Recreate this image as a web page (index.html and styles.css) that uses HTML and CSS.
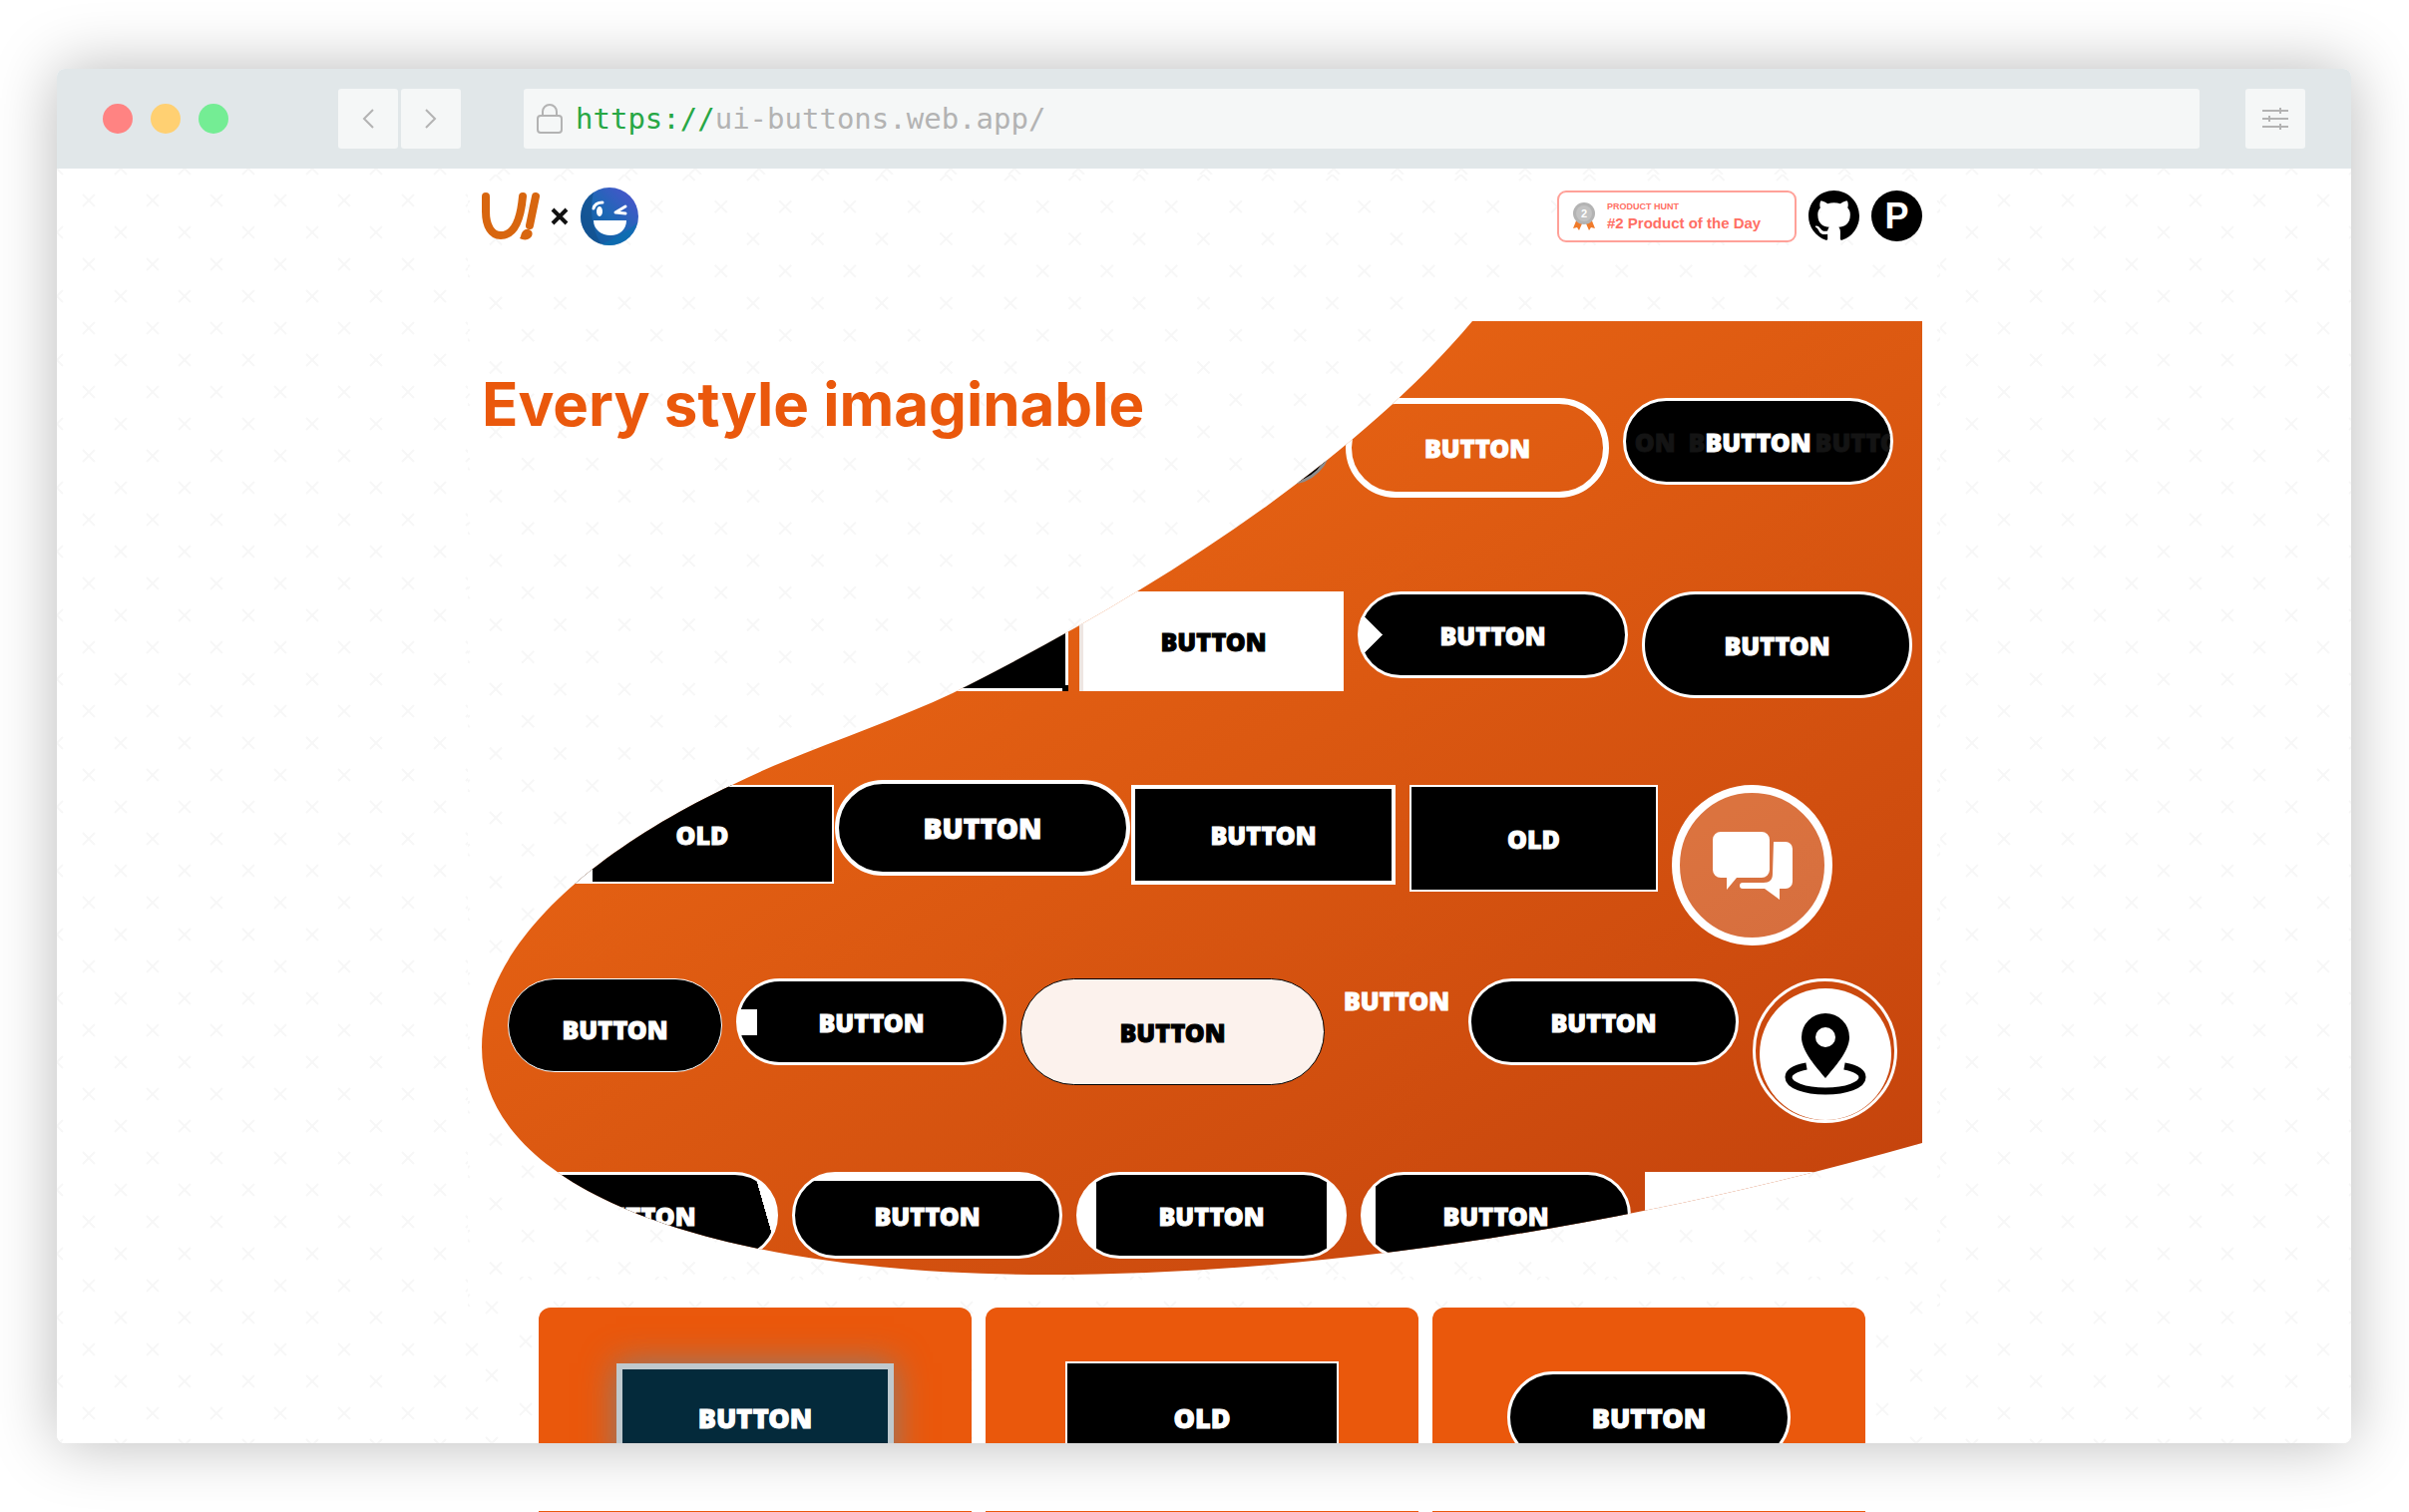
FILE: index.html
```html
<!DOCTYPE html>
<html lang="en">
<head>
  <meta charset="UTF-8">
  <meta name="viewport" content="width=device-width, initial-scale=1.0">
  <title>UI Buttons</title>
  <link rel="stylesheet" href="styles.css">
</head>
<body>
<div class="window">
  <div class="toolbar">
    <div class="lights">
      <span class="light red"></span>
      <span class="light yellow"></span>
      <span class="light green"></span>
    </div>
    <div class="nav">
      <button class="tool" aria-label="Back"><svg width="16" height="26" viewBox="0 0 16 26"><path d="M13 4 4 13l9 9"/></svg></button>
      <button class="tool" aria-label="Forward"><svg width="16" height="26" viewBox="0 0 16 26"><path d="m3 4 9 9-9 9"/></svg></button>
    </div>
    <div class="address">
      <svg width="28" height="32" viewBox="0 0 28 32"><rect x="2" y="13" width="24" height="17" rx="3"/><path d="M7 13V9a7 7 0 0 1 14 0v4"/></svg>
      <span class="url"><span class="scheme">https://</span>ui-buttons.web.app/</span>
    </div>
    <button class="tool" aria-label="Settings"><svg width="28" height="24" viewBox="0 0 28 24"><path d="M1 4h26M1 12h26M1 20h26M19 1v6M8 9v6M19 17v6"/></svg></button>
  </div>

  <div class="page">
    <main class="hero">
      <header class="header">
        <a class="brand" href="#" aria-label="UI Buttons">
          <svg width="58" height="49" viewBox="0 0 58 49" fill="none" stroke="#d8660f" stroke-width="8" stroke-linecap="round">
            <path d="M4 5v15c0 15 6 24 15 24 14 0 20-17 22-39"/>
            <path d="m54 5-6 29"/>
            <path d="M39 45c1-5 4-8 8-7 5 1 5 8-1 10-3 1-6 0-8-1z" fill="#d8660f" stroke="none"/>
          </svg>
          <svg class="times" width="18" height="18" viewBox="0 0 18 18"><path d="m2 2 14 14M16 2 2 16" stroke="#111" stroke-width="4"/></svg>
          <svg width="60" height="60" viewBox="0 0 60 60">
            <defs>
              <linearGradient id="face" x1="0" y1="1" x2="1" y2="0">
                <stop offset="0" stop-color="#0f5596"/>
                <stop offset=".5" stop-color="#1d68b5"/>
                <stop offset="1" stop-color="#5350d0"/>
              </linearGradient>
            </defs>
            <circle cx="30" cy="30" r="29" fill="url(#face)"/>
            <path d="M14 6a29 29 0 0 0 8 52C12 44 10 22 14 6z" fill="#12508c" opacity=".7"/>
            <path d="M22 58a29 29 0 0 0 36-22C48 46 34 52 22 58z" fill="#0a6fb0" opacity=".7"/>
            <ellipse cx="20" cy="25" rx="3" ry="5" fill="#fff"/>
            <path d="M14 22c1-4 4-6 9-6M46 20l-10 6 10 1" fill="none" stroke="#fff" stroke-width="3" stroke-linecap="round" stroke-linejoin="round"/>
            <path d="M14 34h33c0 9-7 15-16 15s-17-6-17-15z" fill="#fff"/>
          </svg>
        </a>
        <div class="links">
          <a class="award" href="#">
            <svg width="22" height="28" viewBox="0 0 22 28">
              <path d="m4 16-4 10 4-1 2 3 4-9zM18 16l4 10-4-1-2 3-4-9z" fill="#f07a2a"/>
              <circle cx="11" cy="11" r="11" fill="#b3b3b3"/>
              <circle cx="11" cy="11" r="8" fill="#c2c2c2"/>
              <text x="11" y="15" text-anchor="middle" class="rank">2</text>
            </svg>
            <span class="award-text">
              <small>PRODUCT HUNT</small>
              <strong>#2 Product of the Day</strong>
            </span>
          </a>
          <a href="#" aria-label="GitHub">
            <svg width="51" height="51" viewBox="0 0 16 16"><path d="M8 0C3.58 0 0 3.58 0 8c0 3.54 2.29 6.53 5.47 7.59.4.07.55-.17.55-.38 0-.19-.01-.82-.01-1.49-2.01.37-2.53-.49-2.69-.94-.09-.23-.48-.94-.82-1.13-.28-.15-.68-.52-.01-.53.63-.01 1.08.58 1.23.82.72 1.21 1.87.87 2.33.66.07-.52.28-.87.51-1.07-1.78-.2-3.64-.89-3.64-3.95 0-.87.31-1.59.82-2.15-.08-.2-.36-1.02.08-2.12 0 0 .67-.21 2.2.82.64-.18 1.32-.27 2-.27s1.36.09 2 .27c1.53-1.04 2.2-.82 2.2-.82.44 1.1.16 1.92.08 2.12.51.56.82 1.27.82 2.15 0 3.07-1.87 3.75-3.65 3.95.29.25.54.73.54 1.48 0 1.07-.01 1.93-.01 2.2 0 .21.15.46.55.38A8.01 8.01 0 0 0 16 8c0-4.42-3.58-8-8-8z"/></svg>
          </a>
          <a class="ph" href="#" aria-label="Product Hunt">P</a>
        </div>
      </header>

      <div class="stage">
        <h1>Every style imaginable</h1>
        <div class="wall">
          <div class="row row-1">
            <button class="btn dim"></button>
            <button class="btn outline">BUTTON</button>
            <button class="btn ghost"><span class="trail before">ON &nbsp;B</span><span>BUTTON</span><span class="trail">BUTTO</span></button>
          </div>
          <div class="row row-2">
            <button class="btn corner"></button>
            <button class="btn white">BUTTON</button>
            <button class="btn arrow">BUTTON</button>
            <button class="btn tall">BUTTON</button>
          </div>
          <div class="row row-3">
            <button class="btn old first">OLD</button>
            <button class="btn big">BUTTON</button>
            <button class="btn square">BUTTON</button>
            <button class="btn old second">OLD</button>
            <button class="round chat" aria-label="Chat">
              <svg width="82" height="68" viewBox="0 0 82 68" fill="#fff"><path d="M9 0h41a8 8 0 0 1 8 8v30a8 8 0 0 1-8 8H25L15 58V46H9a8 8 0 0 1-8-8V8a8 8 0 0 1 8-8z"/><path d="M62 10h12a7 7 0 0 1 7 7v33a7 7 0 0 1-7 7h-6v11L53 57H31a3 3 0 0 1 0-6h21c6 0 9-3 9-9z"/></svg>
            </button>
          </div>
          <div class="row">
            <button class="btn short">BUTTON</button>
            <button class="btn block">BUTTON</button>
            <button class="btn pale">BUTTON</button>
            <button class="btn plain">BUTTON</button>
            <button class="btn">BUTTON</button>
            <button class="round pin" aria-label="Location">
              <span class="disc">
                <svg width="82" height="82" viewBox="0 0 82 82"><path d="M41 0a24 24 0 0 0-24 24c0 14 15 30 24 41 9-11 24-27 24-41A24 24 0 0 0 41 0zm0 14a10 10 0 1 1 0 20 10 10 0 0 1 0-20z" fill-rule="evenodd"/><path d="M22 53C11 55 4 59 4 64c0 8 16 14 37 14s37-6 37-14c0-5-7-9-18-11" fill="none" stroke="#000" stroke-width="7"/></svg>
              </span>
            </button>
          </div>
          <div class="row">
            <button class="btn slant">BUTTON</button>
            <button class="btn band-top">BUTTON</button>
            <button class="btn band-sides">BUTTON</button>
            <button class="btn band-left">BUTTON</button>
            <button class="btn blank"></button>
          </div>
        </div>
      </div>
    </main>

    <section class="gallery">
      <div class="card"><button class="btn glow">BUTTON</button></div>
      <div class="card"><button class="btn card-old">OLD</button></div>
      <div class="card"><button class="btn card-pill">BUTTON</button></div>
    </section>
  </div>
</div>

<div class="next-row">
  <span></span><span></span><span></span>
</div>

<!-- outline of the orange hero wall -->
<svg class="defs" width="0" height="0">
  <clipPath id="blob" clipPathUnits="objectBoundingBox" transform="scale(0.00069252 0.00104603)">
    <path d="M993 0C862 156 642 288 472 373 402 406 317 432 251 465 117 528 0 623 0 728 0 873 237 956 567 956 847 956 1157 906 1444 824V0z"/>
  </clipPath>
</svg>
</body>
</html>
```
FILE: styles.css
```css
* {
  box-sizing: border-box;
}
body {
  margin: 0;
  padding: 69px 58px 0 57px;
  height: 100vh;
  overflow: hidden;
  background-color: #fff;
  font-family: "Noto Sans", "Open Sans", sans-serif;
}
button {
  font-family: inherit;
  cursor: pointer;
}
.window {
  height: calc(100vh - 138px);
  overflow: hidden;
  border-radius: 8px;
  background-color: #fff;
  box-shadow: 0 0 64px rgba(0, 0, 0, 0.28);
}

/* browser toolbar */
.toolbar {
  display: flex;
  align-items: center;
  height: 100px;
  padding: 0 46px;
  background-color: #e1e7e9;
}
.lights {
  display: flex;
  gap: 18px;
  margin-right: 110px;
}
.light {
  width: 30px;
  height: 30px;
  border-radius: 50%;
}
.red {
  background-color: #ff8382;
}
.yellow {
  background-color: #ffd072;
}
.green {
  background-color: #74ed94;
}
.nav {
  display: flex;
  gap: 3px;
  margin-right: 63px;
}
.tool {
  display: flex;
  justify-content: center;
  align-items: center;
  width: 60px;
  height: 60px;
  padding: 0;
  border: none;
  border-radius: 3px;
  background-color: #f5f7f7;
}
.toolbar svg {
  fill: none;
  stroke: #b3b3b3;
  stroke-width: 2;
}
.address {
  flex: 1;
  display: flex;
  align-items: center;
  gap: 12px;
  height: 60px;
  margin-right: 46px;
  padding: 0 12px;
  border-radius: 3px;
  background-color: #f5f7f7;
}
.url {
  font-family: "DejaVu Sans Mono", monospace;
  font-size: 29px;
  color: #b3b3b3;
}
.scheme {
  color: #28a745;
}

/* page */
.page {
  padding-top: 6px;
  background: url("data:image/svg+xml,%3Csvg xmlns='http://www.w3.org/2000/svg' width='64' height='64' fill='none' stroke='%23f7f7f7' stroke-width='2'%3E%3Cpath d='M26 26l12 12M38 26L26 38M-6-6L6 6M58-6l12 12M6-6L-6 6M70-6L58 6M-6 58L6 70M58 58l12 12M6 58L-6 70M70 58L58 70'/%3E%3C/svg%3E") #fff;
}
.hero {
  max-width: 1476px;
  margin: 0 auto;
  padding: 12px 18px 33px 14px;
  background: url("data:image/svg+xml,%3Csvg xmlns='http://www.w3.org/2000/svg' width='129' height='129' viewBox='0 0 128 128' fill='none' stroke='%23f7f7f7' stroke-width='2'%3E%3Cdefs%3E%3Cpath id='x' d='M-6-6L6 6M6-6L-6 6'/%3E%3C/defs%3E%3Cuse href='%23x'/%3E%3Cuse href='%23x' x='64'/%3E%3Cuse href='%23x' x='128'/%3E%3Cuse href='%23x' y='64'/%3E%3Cuse href='%23x' x='64' y='64'/%3E%3Cuse href='%23x' x='128' y='64'/%3E%3Cuse href='%23x' y='128'/%3E%3Cuse href='%23x' x='64' y='128'/%3E%3Cuse href='%23x' x='128' y='128'/%3E%3Cuse href='%23x' x='32' y='32'/%3E%3Cuse href='%23x' x='96' y='32'/%3E%3Cuse href='%23x' x='32' y='96'/%3E%3Cuse href='%23x' x='96' y='96'/%3E%3C/svg%3E") 28px 0 #fff;
}
.header {
  display: flex;
  justify-content: space-between;
  align-items: center;
  height: 59px;
  margin-bottom: 76px;
}
.brand,
.links {
  display: flex;
  align-items: center;
  gap: 12px;
}
.brand {
  gap: 11px;
}
.links a {
  display: flex;
}
.links .award {
  align-items: center;
  gap: 12px;
  width: 240px;
  height: 52px;
  padding: 0 14px;
  border: 2px solid #ffa199;
  border-radius: 9px;
  background-color: #fff;
  color: #ff6f64;
  font-family: "Liberation Sans", Arial, sans-serif;
  text-decoration: none;
}
.award-text {
  display: flex;
  flex-direction: column;
}
.award small {
  font-size: 9px;
  font-weight: bold;
  line-height: 14px;
}
.award strong {
  font-size: 15px;
  line-height: 20px;
}
.rank {
  fill: #fff;
  font-size: 11px;
  font-weight: bold;
}
.links .ph {
  justify-content: center;
  align-items: center;
  width: 51px;
  height: 51px;
  border-radius: 50%;
  background-color: #000;
  color: #fff;
  font-family: "Liberation Sans", Arial, sans-serif;
  font-size: 36px;
  font-weight: bold;
  text-decoration: none;
}

/* hero */
.stage {
  display: grid;
}
.stage > * {
  grid-area: 1 / 1;
}
h1 {
  z-index: 1;
  justify-self: start;
  align-self: start;
  margin: 47px 0 0;
  color: #ea580c;
  font-family: Inter, sans-serif;
  font-size: 60px;
  font-weight: 700;
  line-height: 72px;
}
.wall {
  height: 956px;
  padding: 77px 0 0 26px;
  overflow: hidden;
  background: linear-gradient(150deg, #ea6614 20%, #c2410c);
  clip-path: url(#blob);
}
.row {
  display: flex;
  align-items: flex-start;
  gap: 14px;
  height: 194px;
}
.row-1 {
  padding-left: 555px;
}
.row-2 {
  padding-left: 294px;
}
.row-3 {
  padding-left: 63px;
}
.btn {
  flex: none;
  width: 271px;
  height: 87px;
  padding: 0;
  border: 3px solid #fff;
  border-radius: 60px;
  background-color: #000;
  color: #fff;
  font-size: 25px;
  font-weight: 900;
  -webkit-text-stroke: 1px;
}
.dim {
  border-color: #8c8c8c;
}
.outline {
  width: 264px;
  height: 100px;
  border-width: 6px;
  background: none;
}
.ghost {
  display: grid;
  grid-template-columns: minmax(0, 1fr) auto minmax(0, 1fr);
  align-items: center;
  overflow: hidden;
}
.trail {
  padding-left: 4px;
  color: #141414;
  text-align: left;
}
.before {
  padding: 0;
  text-align: right;
}
.corner {
  width: 268px;
  height: 100px;
  margin-right: -3px;
  border: none;
  border-radius: 0;
  background:
    linear-gradient(#000, #000) 100% 100% / 6px 6px no-repeat,
    linear-gradient(#000, #000) 0 0 / calc(100% - 3px) calc(100% - 3px) no-repeat,
    #fff;
}
.white {
  width: 265px;
  height: 100px;
  border: none;
  border-left: 4px solid #eee6e2;
  border-radius: 0;
  background-color: #fff;
  color: #000;
}
.arrow {
  background: conic-gradient(from 225deg at 22px 50%, #fff 90deg, #000 0);
}
.tall {
  height: 107px;
}
.old {
  border-width: 2px;
  border-radius: 0;
}
.first {
  width: 264px;
  height: 99px;
  border-left-width: 22px;
  padding-right: 20px;
}
.second {
  width: 249px;
  height: 107px;
}
.big {
  width: 296px;
  height: 96px;
  margin: -5px -13px 0;
  border-width: 4px;
  font-size: 28px;
}
.square {
  width: 265px;
  height: 100px;
  border-width: 4px;
  border-radius: 0;
}
.round {
  display: flex;
  flex: none;
  justify-content: center;
  align-items: center;
  padding: 0;
  border: 8px solid #fff;
  border-radius: 50%;
}
.chat {
  width: 161px;
  height: 161px;
  background-color: rgba(255, 255, 255, 0.2);
}
.pin {
  align-items: flex-end;
  width: 145px;
  height: 145px;
  border-width: 3px;
  background: none;
}
.disc {
  display: flex;
  justify-content: center;
  align-items: center;
  width: 132px;
  height: 132px;
  border-radius: 50%;
  background-color: #fff;
}
.short {
  width: 215px;
  height: 94px;
  padding-top: 8px;
  border-width: 1px;
}
.block {
  background: linear-gradient(#fff, #fff) 0 50% / 18px 26px no-repeat #000;
}
.pale {
  width: 305px;
  height: 107px;
  border: 1px solid #000;
  background-color: #fcf2ed;
  color: #000;
}
.plain {
  width: 116px;
  height: 44px;
  border: none;
  background: none;
}
.slant {
  background: linear-gradient(74deg, #000 93%, #fff 0);
}
.band-top {
  background: linear-gradient(#fff 6px, #000 0);
}
.band-sides {
  background: linear-gradient(90deg, #fff 17px, #000 0 calc(100% - 17px), #fff 0);
}
.band-left {
  background: linear-gradient(90deg, #fff 12px, #000 0);
}
.blank {
  border: none;
  border-radius: 0;
  background-color: #fff;
}

/* cards */
.gallery {
  display: grid;
  grid-template-columns: repeat(3, 1fr);
  gap: 14px;
  max-width: 1454px;
  margin: -31px auto 0;
  padding: 31px 64px 0 60px;
  background: url("data:image/svg+xml,%3Csvg xmlns='http://www.w3.org/2000/svg' width='68' height='68' fill='none' stroke='%23f7f7f7' stroke-width='2'%3E%3Cpath d='M7 25l12 12M19 25L7 37M41-9L53 3M53-9L41 3M41 59l12 12M53 59L41 71'/%3E%3C/svg%3E") #fff;
}
.card {
  display: flex;
  justify-content: center;
  align-items: center;
  height: 220px;
  border-radius: 12px;
  background-color: #ea580c;
}
.card .btn {
  font-size: 27px;
}
.card .glow {
  width: 278px;
  height: 108px;
  border: 6px solid #bfc9ce;
  border-radius: 0;
  background-color: #042a3b;
  box-shadow: 0 0 32px #8a7d76;
}
.card .card-old {
  width: 274px;
  height: 112px;
  border-width: 2px;
  border-radius: 0;
}
.card .card-pill {
  width: 284px;
  height: 92px;
}
.next-row {
  display: grid;
  grid-template-columns: repeat(3, 1fr);
  gap: 14px;
  max-width: 1454px;
  margin: 68px auto 0;
  padding: 0 64px 0 60px;
}
.next-row span {
  height: 1px;
  background-color: #ea580c;
}
.defs {
  position: absolute;
}
```
